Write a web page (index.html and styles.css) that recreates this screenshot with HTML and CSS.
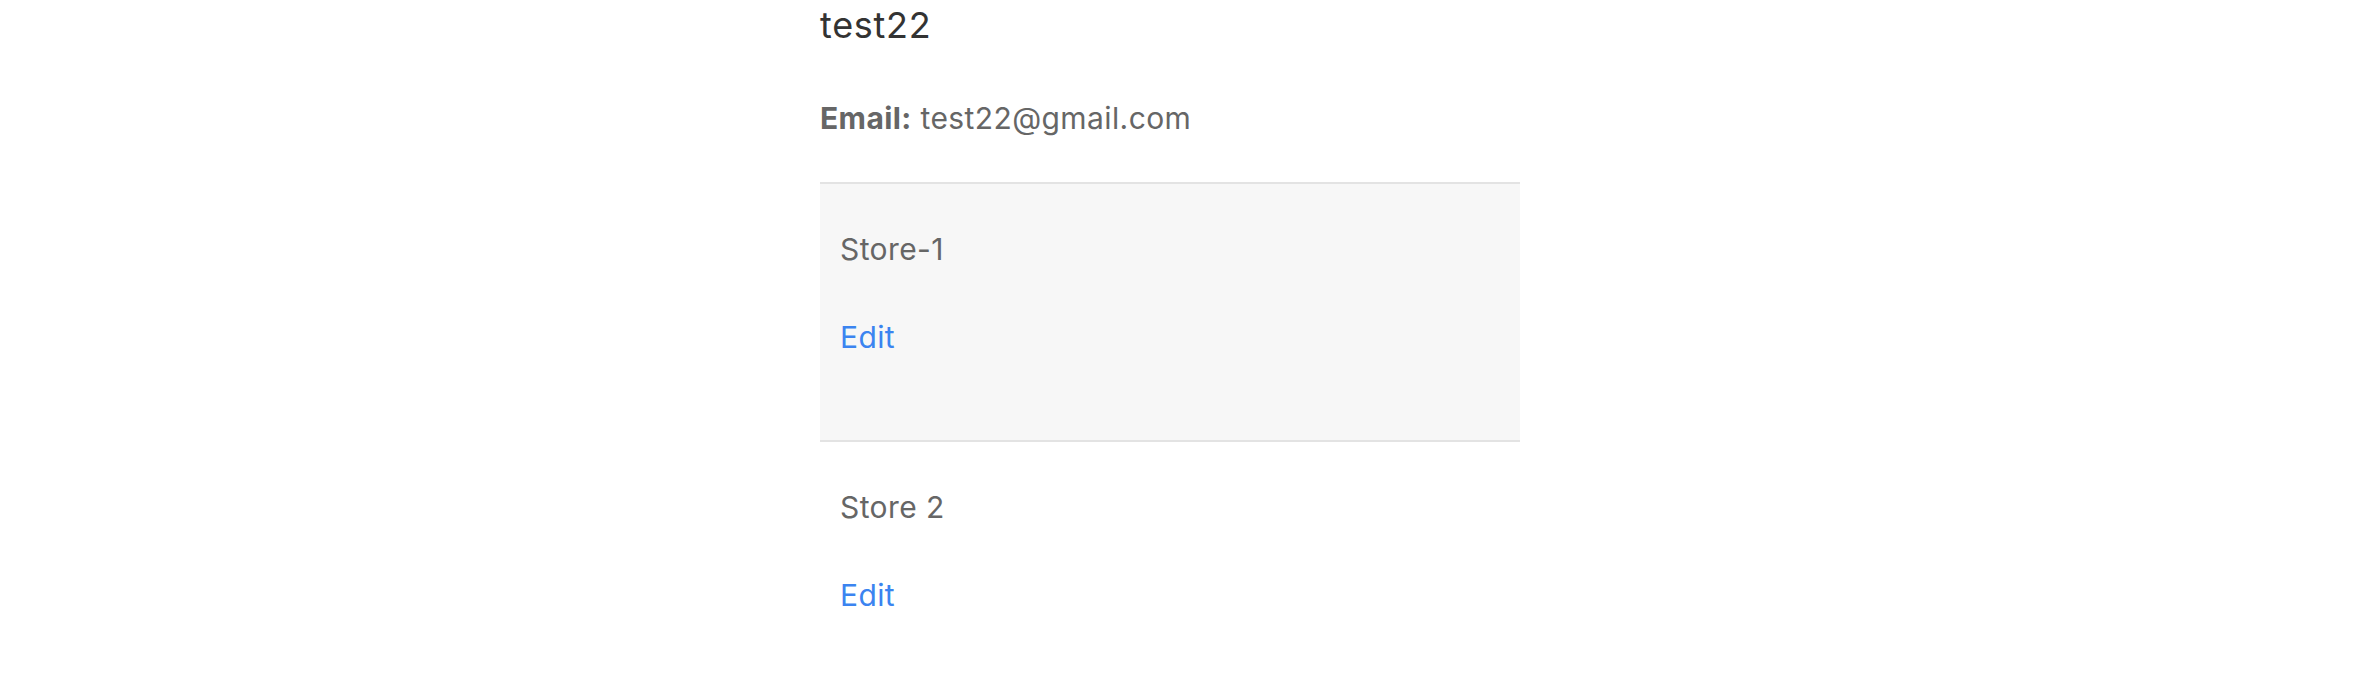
FILE: index.html
```html
<!DOCTYPE html>
<html lang="en">
<head>
<meta charset="utf-8">
<title>test22</title>
<link rel="stylesheet" href="styles.css">
</head>
<body>
<main class="account">
  <h1 class="account-name">test22</h1>
  <p class="account-email"><strong>Email:</strong> test22@gmail.com</p>
  <ul class="store-list">
    <li class="store store--active">
      <p class="store-name">Store-1</p>
      <a class="store-edit" href="#">Edit</a>
    </li>
    <li class="store">
      <p class="store-name">Store 2</p>
      <a class="store-edit" href="#">Edit</a>
    </li>
  </ul>
</main>
</body>
</html>
```
FILE: styles.css
```css
html, body {
  margin: 0;
  padding: 0;
  background: #ffffff;
}

body {
  font-family: "Inter", "Liberation Sans", sans-serif;
  color: #666666;
  font-size: 30px;
  line-height: 45px;
  letter-spacing: 0.4px;
}

.account {
  width: 700px;
  margin-left: 820px;
  padding-top: 4px;
}

.account-name {
  margin: 0;
  font-size: 36px;
  line-height: 43px;
  font-weight: 400;
  letter-spacing: 0.7px;
  color: #333333;
}

.account-email {
  margin: 49px 0 0;
}

.account-email strong {
  font-weight: 700;
}

.store-list {
  list-style: none;
  margin: 41px 0 0;
  padding: 0;
}

.store {
  display: flex;
  flex-direction: column;
  align-items: flex-start;
  gap: 43px;
  padding: 43px 20px 80px;
  border-top: 2px solid #e3e3e3;
}

.store--active {
  background: #f7f7f7;
}

.store-name {
  margin: 0;
}

.store-edit {
  color: #3b84f0;
  text-decoration: none;
}
```
